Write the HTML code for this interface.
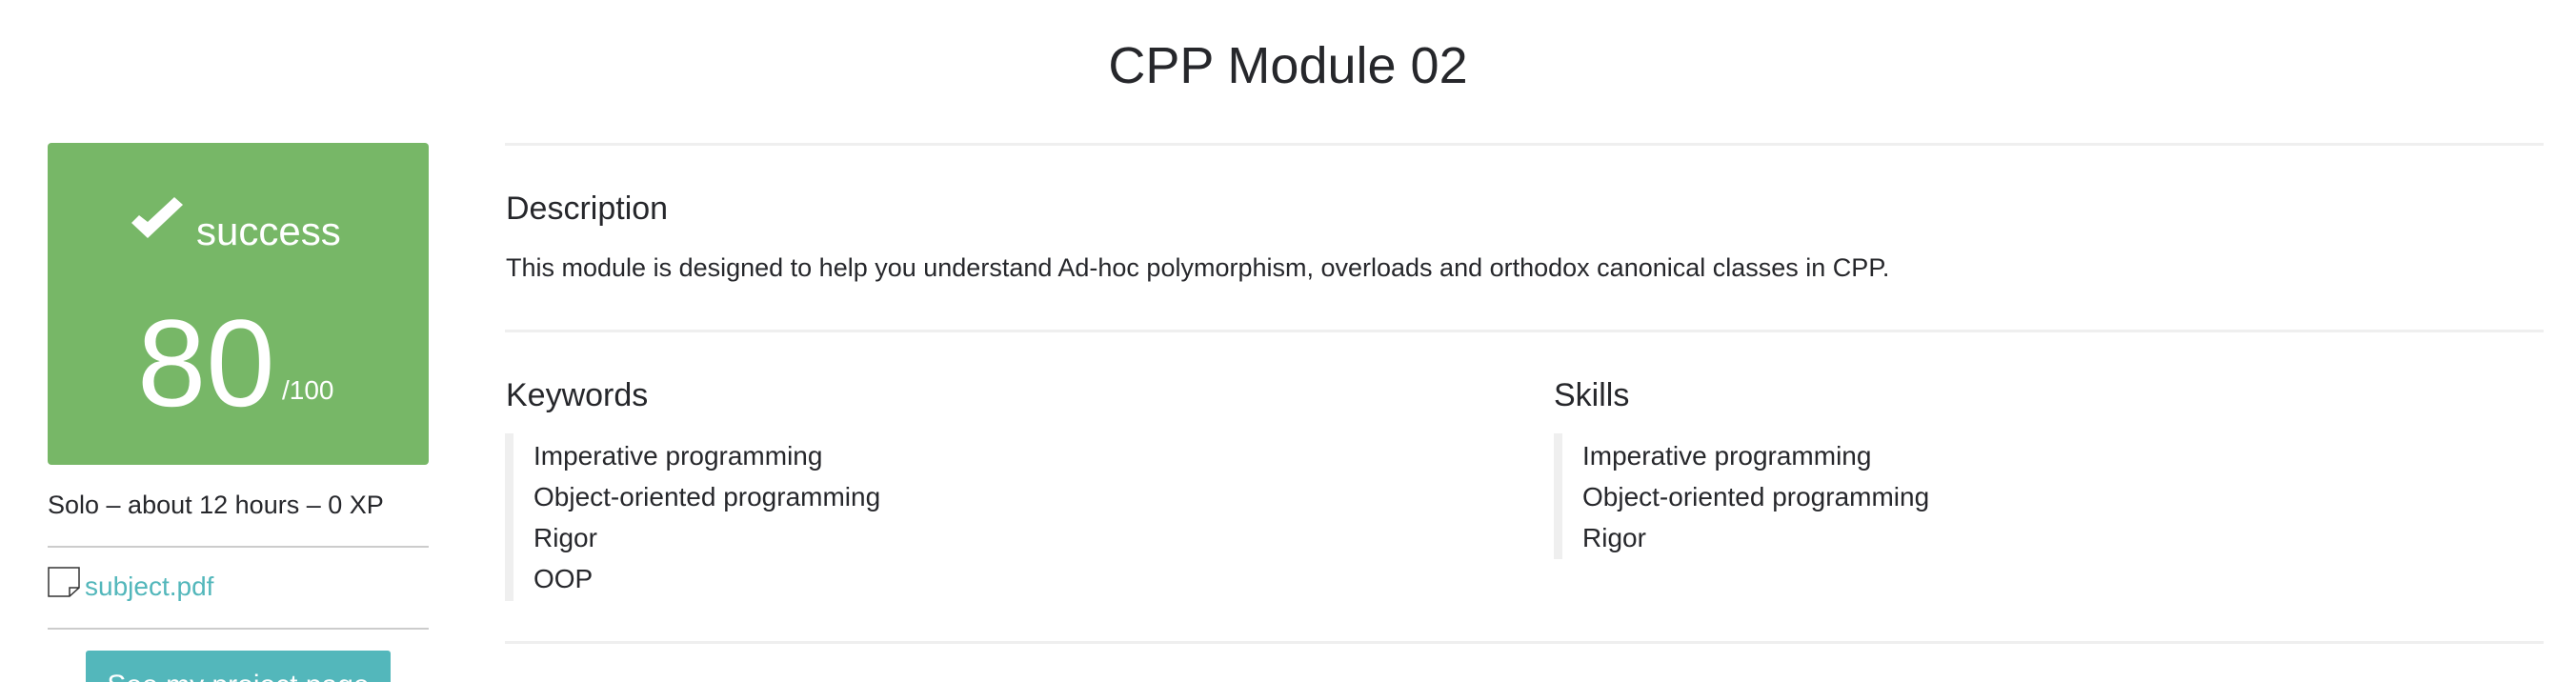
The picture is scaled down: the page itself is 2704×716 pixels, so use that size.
<!DOCTYPE html>
<html style="width:2704px;height:716px;overflow:hidden"><head><meta charset="utf-8"><style>
*{margin:0;padding:0;box-sizing:border-box}
body{width:2704px;height:716px;overflow:hidden;background:#fff;font-family:"Liberation Sans",sans-serif;color:#26272b;position:relative}
.a{position:absolute;white-space:nowrap;line-height:1}
.hr{position:absolute;height:3px;background:#efefef}
.item{font-size:28px}
</style></head><body>
<div class="a" style="left:0;width:2704px;text-align:center;top:42px;font-size:54px;">CPP Module 02</div>
<div class="hr" style="left:530px;width:2140px;top:150px"></div>

<div class="a" style="left:50px;top:150px;width:400px;height:338px;background:#77b767;border-radius:4px"></div>
<svg class="a" style="left:138px;top:207px" width="55" height="45" viewBox="0 0 55 45"><path d="M0 27 L17 43 L54 8 L45 0 L17 26 L8 19 Z" fill="#fff"/></svg>
<div class="a" style="left:206px;top:222px;font-size:42px;color:#fff">success</div>
<div class="a" style="left:144px;top:316px;font-size:130px;color:#fff">80</div>
<div class="a" style="left:296px;top:396px;font-size:28px;color:#fff">/100</div>

<div class="a" style="left:50px;top:517px;font-size:27px">Solo – about 12 hours – 0 XP</div>
<div class="a" style="left:50px;top:573px;width:400px;height:2px;background:#ccc"></div>
<svg class="a" style="left:50px;top:595px" width="34" height="32" viewBox="0 0 34 32"><path d="M1 1 H33 V22 L23 31 H1 Z M23 31 V22 H33" fill="none" stroke="#333" stroke-width="1.5"/></svg>
<div class="a" style="left:89px;top:602px;font-size:28px;color:#53b7bb">subject.pdf</div>
<div class="a" style="left:50px;top:659px;width:400px;height:2px;background:#ccc"></div>
<div class="a" style="left:90px;top:683px;width:320px;height:33px;overflow:hidden;background:#53b7bb;border-radius:3px 3px 0 0;color:#fff;font-size:30px;text-align:center;padding-top:22px">See my project page</div>

<div class="a" style="left:531px;top:202px;font-size:34px">Description</div>
<div class="a" style="left:531px;top:268px;font-size:27px">This module is designed to help you understand Ad-hoc polymorphism, overloads and orthodox canonical classes in CPP.</div>
<div class="hr" style="left:530px;width:2140px;top:346px"></div>

<div class="a" style="left:531px;top:398px;font-size:34px">Keywords</div>
<div class="a" style="left:530px;top:455px;width:9px;height:176px;background:#efefef"></div>
<div class="a item" style="left:560px;top:465px">Imperative programming</div>
<div class="a item" style="left:560px;top:508px">Object-oriented programming</div>
<div class="a item" style="left:560px;top:551px">Rigor</div>
<div class="a item" style="left:560px;top:594px">OOP</div>

<div class="a" style="left:1631px;top:398px;font-size:34px">Skills</div>
<div class="a" style="left:1631px;top:455px;width:9px;height:132px;background:#efefef"></div>
<div class="a item" style="left:1661px;top:465px">Imperative programming</div>
<div class="a item" style="left:1661px;top:508px">Object-oriented programming</div>
<div class="a item" style="left:1661px;top:551px">Rigor</div>
<div class="hr" style="left:530px;width:2140px;top:673px"></div>
</body></html>
